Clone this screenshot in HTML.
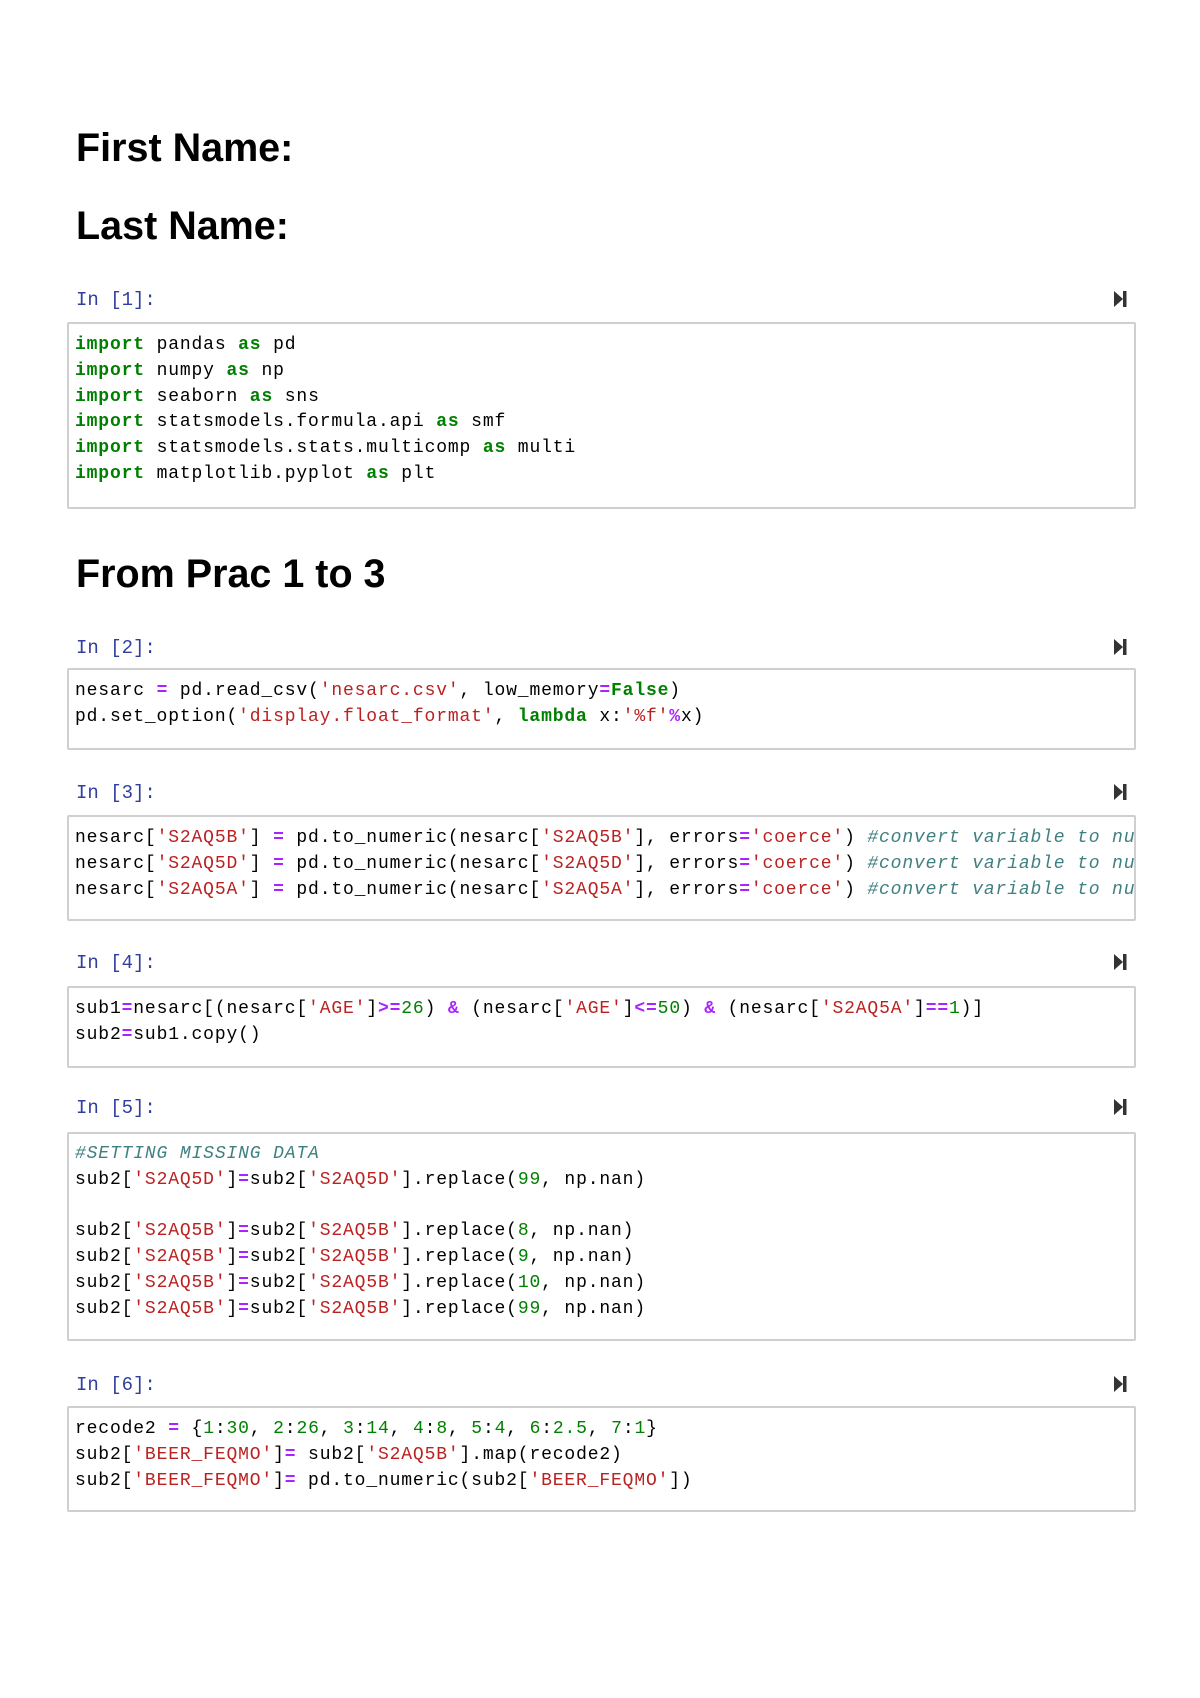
<!DOCTYPE html>
<html><head><meta charset="utf-8"><style>
body{margin:0;background:#fff;width:1200px;height:1698px;position:relative;overflow:hidden}
h1{position:absolute;left:76px;margin:0;font:bold 39.5px/44px "Liberation Sans",sans-serif;color:#000}
.lbl{position:absolute;left:76px;font:19px/20px "Liberation Mono",monospace;color:#303F9F}
.ic{position:absolute;left:1114px;width:13px;height:18px}
.box{position:absolute;left:67px;width:1069px;border:2px solid #cfcfcf;border-radius:2px;overflow:hidden;box-sizing:border-box}
pre{margin:0;position:absolute;left:6px;top:9px;font:18px/25.8px "Liberation Mono",monospace;letter-spacing:0.85px;color:#000;white-space:pre}
.k{color:#008000;font-weight:bold}.s{color:#BA2121}.n{color:#008000}.o{color:#AA22FF;font-weight:bold}.c{color:#408080;font-style:italic}
</style></head><body>
<h1 style="top:126px">First Name:</h1>
<h1 style="top:204px">Last Name:</h1>
<h1 style="top:552px">From Prac 1 to 3</h1>

<div class="lbl" style="top:290px">In [1]:</div>
<svg class="ic" style="top:290px" viewBox="0 0 13 18"><path d="M0 1L9 9L0 17Z" fill="#333"/><rect x="9" y="1" width="3.5" height="16" fill="#333"/></svg>
<div class="box" style="top:322px;height:187px"><pre><span class="k">import</span> pandas <span class="k">as</span> pd
<span class="k">import</span> numpy <span class="k">as</span> np
<span class="k">import</span> seaborn <span class="k">as</span> sns
<span class="k">import</span> statsmodels.formula.api <span class="k">as</span> smf
<span class="k">import</span> statsmodels.stats.multicomp <span class="k">as</span> multi
<span class="k">import</span> matplotlib.pyplot <span class="k">as</span> plt</pre></div>

<div class="lbl" style="top:638px">In [2]:</div>
<svg class="ic" style="top:638px" viewBox="0 0 13 18"><path d="M0 1L9 9L0 17Z" fill="#333"/><rect x="9" y="1" width="3.5" height="16" fill="#333"/></svg>
<div class="box" style="top:668px;height:82px"><pre>nesarc <span class="o">=</span> pd.read_csv(<span class="s">'nesarc.csv'</span>, low_memory<span class="o">=</span><span class="k">False</span>)
pd.set_option(<span class="s">'display.float_format'</span>, <span class="k">lambda</span> x:<span class="s">'%f'</span><span class="o">%</span>x)</pre></div>

<div class="lbl" style="top:783px">In [3]:</div>
<svg class="ic" style="top:783px" viewBox="0 0 13 18"><path d="M0 1L9 9L0 17Z" fill="#333"/><rect x="9" y="1" width="3.5" height="16" fill="#333"/></svg>
<div class="box" style="top:815px;height:106px"><pre>nesarc[<span class="s">'S2AQ5B'</span>] <span class="o">=</span> pd.to_numeric(nesarc[<span class="s">'S2AQ5B'</span>], errors<span class="o">=</span><span class="s">'coerce'</span>) <span class="c">#convert variable to numeric</span>
nesarc[<span class="s">'S2AQ5D'</span>] <span class="o">=</span> pd.to_numeric(nesarc[<span class="s">'S2AQ5D'</span>], errors<span class="o">=</span><span class="s">'coerce'</span>) <span class="c">#convert variable to numeric</span>
nesarc[<span class="s">'S2AQ5A'</span>] <span class="o">=</span> pd.to_numeric(nesarc[<span class="s">'S2AQ5A'</span>], errors<span class="o">=</span><span class="s">'coerce'</span>) <span class="c">#convert variable to numeric</span></pre></div>

<div class="lbl" style="top:953px">In [4]:</div>
<svg class="ic" style="top:953px" viewBox="0 0 13 18"><path d="M0 1L9 9L0 17Z" fill="#333"/><rect x="9" y="1" width="3.5" height="16" fill="#333"/></svg>
<div class="box" style="top:986px;height:82px"><pre>sub1<span class="o">=</span>nesarc[(nesarc[<span class="s">'AGE'</span>]<span class="o">&gt;=</span><span class="n">26</span>) <span class="o">&amp;</span> (nesarc[<span class="s">'AGE'</span>]<span class="o">&lt;=</span><span class="n">50</span>) <span class="o">&amp;</span> (nesarc[<span class="s">'S2AQ5A'</span>]<span class="o">==</span><span class="n">1</span>)]
sub2<span class="o">=</span>sub1.copy()</pre></div>

<div class="lbl" style="top:1098px">In [5]:</div>
<svg class="ic" style="top:1098px" viewBox="0 0 13 18"><path d="M0 1L9 9L0 17Z" fill="#333"/><rect x="9" y="1" width="3.5" height="16" fill="#333"/></svg>
<div class="box" style="top:1132px;height:209px"><pre style="top:8px"><span class="c">#SETTING MISSING DATA</span>
sub2[<span class="s">'S2AQ5D'</span>]<span class="o">=</span>sub2[<span class="s">'S2AQ5D'</span>].replace(<span class="n">99</span>, np.nan)

sub2[<span class="s">'S2AQ5B'</span>]<span class="o">=</span>sub2[<span class="s">'S2AQ5B'</span>].replace(<span class="n">8</span>, np.nan)
sub2[<span class="s">'S2AQ5B'</span>]<span class="o">=</span>sub2[<span class="s">'S2AQ5B'</span>].replace(<span class="n">9</span>, np.nan)
sub2[<span class="s">'S2AQ5B'</span>]<span class="o">=</span>sub2[<span class="s">'S2AQ5B'</span>].replace(<span class="n">10</span>, np.nan)
sub2[<span class="s">'S2AQ5B'</span>]<span class="o">=</span>sub2[<span class="s">'S2AQ5B'</span>].replace(<span class="n">99</span>, np.nan)</pre></div>

<div class="lbl" style="top:1375px">In [6]:</div>
<svg class="ic" style="top:1375px" viewBox="0 0 13 18"><path d="M0 1L9 9L0 17Z" fill="#333"/><rect x="9" y="1" width="3.5" height="16" fill="#333"/></svg>
<div class="box" style="top:1406px;height:106px"><pre>recode2 <span class="o">=</span> {<span class="n">1</span>:<span class="n">30</span>, <span class="n">2</span>:<span class="n">26</span>, <span class="n">3</span>:<span class="n">14</span>, <span class="n">4</span>:<span class="n">8</span>, <span class="n">5</span>:<span class="n">4</span>, <span class="n">6</span>:<span class="n">2.5</span>, <span class="n">7</span>:<span class="n">1</span>}
sub2[<span class="s">'BEER_FEQMO'</span>]<span class="o">=</span> sub2[<span class="s">'S2AQ5B'</span>].map(recode2)
sub2[<span class="s">'BEER_FEQMO'</span>]<span class="o">=</span> pd.to_numeric(sub2[<span class="s">'BEER_FEQMO'</span>])</pre></div>
</body></html>
